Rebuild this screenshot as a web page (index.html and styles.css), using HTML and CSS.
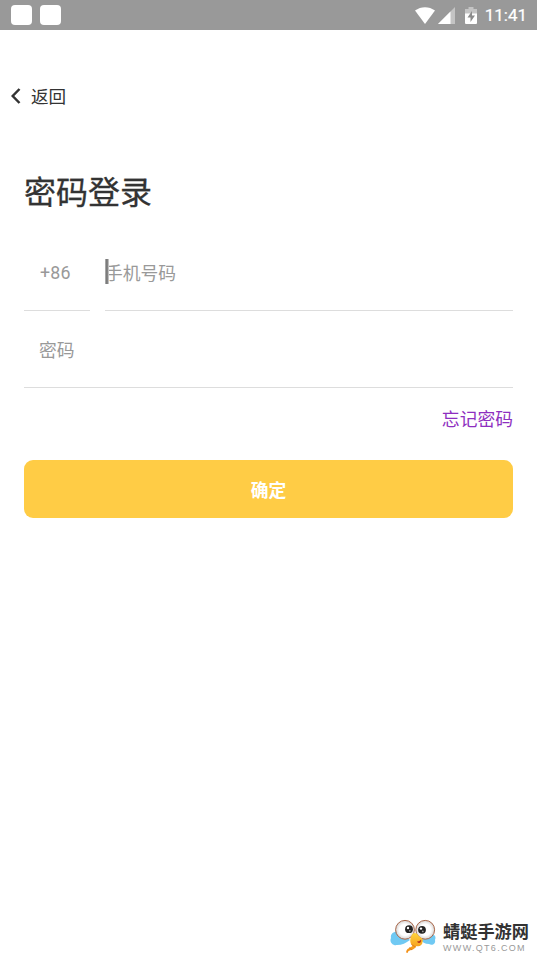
FILE: index.html
```html
<!DOCTYPE html>
<html lang="zh-CN">
<head>
    <meta charset="UTF-8">
    <meta name="viewport" content="width=device-width, initial-scale=1.0">
    <title>密码登录</title>
    <link rel="stylesheet" href="styles.css">
</head>
<body>

    <header class="status-bar">
        <div class="notifications">
            <span class="notice"></span>
            <span class="notice"></span>
        </div>
        <svg class="wifi" width="20" height="17" viewBox="0 0 20 17">
            <path d="M0 3.6C6-1 14-1 20 3.6L10 17z" fill="#fff"/>
        </svg>
        <svg class="signal" width="17" height="17" viewBox="0 0 17 17">
            <path d="M17 0v17H0z" fill="#c4c4c4"/>
            <path d="M12.5 4.5V17H0z" fill="#fff"/>
        </svg>
        <svg class="battery" width="12" height="17" viewBox="0 0 12 17">
            <path d="M3.5 0h5v2H12v5H0V2h3.5z" fill="#c4c4c4"/>
            <path d="M0 6.5h12V16a1 1 0 0 1-1 1H1a1 1 0 0 1-1-1z" fill="#fff"/>
            <path d="M7 4L2.5 10.5h3V15L10 8.5H7z" fill="#8c8c8c"/>
        </svg>
        <span class="clock">11:41</span>
    </header>

    <a class="back" href="#">
        <svg width="10" height="16" viewBox="0 0 10 16">
            <path d="M8.5 1L1.7 8l6.8 7" fill="none" stroke="#333" stroke-width="2.5"/>
        </svg>
        <span class="back-text">返回</span>
    </a>

    <main class="login">
        <h1>密码登录</h1>

        <div class="phone-row">
            <div class="field code">+86</div>
            <div class="field phone">
                <input type="text" placeholder="手机号码">
                <span class="caret"></span>
            </div>
        </div>
        <div class="field password">
            <input type="password" placeholder="密码">
        </div>

        <a class="forgot" href="#">忘记密码</a>
        <button class="submit">确定</button>
    </main>

    <footer class="brand">
        <svg width="48" height="36" viewBox="0 0 48 36">
            <defs>
                <radialGradient id="eye">
                    <stop offset="0.6" stop-color="#fff"/>
                    <stop offset="1" stop-color="#d5d3d2"/>
                </radialGradient>
                <linearGradient id="body" x1="0" y1="0" x2="0" y2="1">
                    <stop offset="0" stop-color="#ffd43c"/>
                    <stop offset="1" stop-color="#f28a12"/>
                </linearGradient>
            </defs>
            <!-- wings -->
            <path d="M11 13C4 11 0 15 1 19c-2 4 2 8 6 7 5 0 9-2 13-5z" fill="#70c9f3"/>
            <path d="M36 17c7-4 11 0 9 4 1 4-3 6-6 4-4 0-7-2-9-5z" fill="#70c9f3"/>
            <!-- eyes -->
            <circle cx="15" cy="10.8" r="9.4" fill="url(#eye)" stroke="#a86548" stroke-width="1"/>
            <circle cx="35.2" cy="10.8" r="9.4" fill="url(#eye)" stroke="#a86548" stroke-width="1"/>
            <circle cx="19" cy="10.2" r="3.9" fill="#222"/>
            <circle cx="32" cy="10.8" r="3.9" fill="#222"/>
            <circle cx="18" cy="9" r="1.2" fill="#fff"/>
            <circle cx="31" cy="9.6" r="1.2" fill="#fff"/>
            <circle cx="19.8" cy="11.8" r="0.9" fill="#999"/>
            <circle cx="32.8" cy="12.4" r="0.9" fill="#999"/>
            <!-- head and tail -->
            <path d="M22.5 15c2-2 5-1 6 2 4 2 5 4 4 6 0 3-3 5-6 4-2 4-6 4-8 5l-1 2c-1 0-2-1-1-2 0-2 3-3 6-5-3-3-3-8 0-12z" fill="url(#body)"/>
            <path d="M21.5 25.5l4 2.5M19 28.5l3 2.5" stroke="#d9791a" stroke-width="0.8"/>
            <path d="M27 22.5c2 0 3-1 4-2 1 3-2 5-4 2z" fill="#b93820"/>
        </svg>
        <div class="brand-text">
            <span class="brand-name">蜻蜓手游网</span>
            <span class="brand-url">WWW.QT6.COM</span>
        </div>
    </footer>

</body>
</html>
```

FILE: styles.css
```css
* {
    box-sizing: border-box;
}
body {
    display: flex;
    flex-direction: column;
    height: 956px;
    margin: 0;
    overflow: hidden;
    background-color: #fff;
    color: #333;
    font-family: Roboto, "Noto Sans CJK SC", sans-serif;
    font-size: 17.8px;
}
a {
    text-decoration: none;
}
.status-bar {
    display: flex;
    align-items: center;
    height: 30px;
    padding: 0 10px 0 11px;
    background-color: #999;
    color: #fff;
}
.notifications {
    display: flex;
    flex: 1;
    gap: 8px;
}
.notice {
    width: 21px;
    height: 20px;
    border-radius: 4px;
    background-color: #fff;
}
.wifi {
    margin-right: 3px;
}
.battery {
    margin: 0 8px 0 10px;
}
.clock {
    font-size: 17px;
    line-height: 30px;
    -webkit-text-stroke: 0.2px #fff;
}
.back {
    display: flex;
    align-items: center;
    gap: 10px;
    height: 26px;
    margin-top: 53px;
    padding-left: 11px;
    color: #333;
    line-height: 26px;
}
.back-text {
    padding-top: 2px;
    font-size: 17.6px;
}
.login {
    display: flex;
    flex-direction: column;
    padding: 0 24px;
}
h1 {
    margin: 60px 0 0;
    font-size: 32px;
    font-weight: 400;
    line-height: 48px;
    -webkit-text-stroke: 0.3px #333;
}
.phone-row {
    display: flex;
    gap: 15px;
    margin-top: 17px;
}
.field {
    display: flex;
    align-items: center;
    height: 77px;
    padding-top: 2px;
    border-bottom: 1px solid #ddd;
    color: #999;
}
.code {
    width: 66px;
    padding-top: 0;
    padding-left: 16px;
    letter-spacing: 0.2px;
}
.phone {
    position: relative;
    flex: 1;
}
.password {
    padding-top: 3px;
    padding-left: 15px;
}
.field input {
    width: 100%;
    padding: 0;
    border: none;
    outline: none;
    background: none;
    font: inherit;
}
.field input::placeholder {
    color: #999;
}
.caret {
    position: absolute;
    left: 0;
    top: 25px;
    width: 4px;
    height: 25px;
    background: linear-gradient(to right, #bbb, #666, #ddd);
}
.forgot {
    align-self: flex-end;
    margin-top: 19px;
    color: #8e2fc0;
    line-height: 26px;
}
.submit {
    height: 58px;
    margin-top: 27px;
    padding: 0 0 1px;
    border: none;
    border-radius: 9px;
    background-color: #ffcc45;
    color: #fff;
    font: inherit;
    font-weight: bold;
}
.brand {
    display: flex;
    gap: 5px;
    margin-top: auto;
    padding: 0 8px 1px 0;
    justify-content: flex-end;
}
.brand-text {
    display: flex;
    flex-direction: column;
    padding-top: 2px;
}
.brand-name {
    font-size: 17.2px;
    font-weight: bold;
    line-height: 23px;
}
.brand-url {
    color: #999;
    font-family: "Liberation Sans", sans-serif;
    font-size: 9px;
    letter-spacing: 1.3px;
    line-height: 8px;
}
```
